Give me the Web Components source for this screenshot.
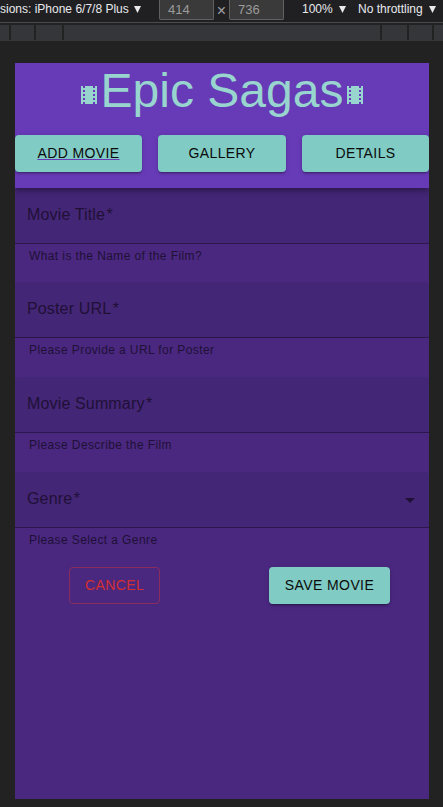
<!DOCTYPE html>
<html lang="en"><head><meta charset="utf-8"><title>Epic Sagas</title>
<style>html,body{margin:0;height:100%;overflow:hidden;background:#222223;font-family:"Liberation Sans",Arial,sans-serif}</style>
</head><body><saga-app></saga-app>
<script>
const define = (name, html, setup) => customElements.define(name, class extends HTMLElement {
  connectedCallback() {
    if (this.shadowRoot) return;
    const t = document.createElement('template');
    t.innerHTML = html;
    this.attachShadow({mode: 'open'}).append(t.content.cloneNode(true));
    if (setup) setup(this, this.shadowRoot);
  }
});

define('film-icon', `<style>:host{display:block;width:24px;height:24px;flex:none}svg{display:block}</style>
<svg width="24" height="24" viewBox="0 0 24 24" fill="currentColor"><path d="M18 3v2h-2V3H8v2H6V3H4v18h2v-2h2v2h8v-2h2v2h2V3h-2zM8 17H6v-2h2v2zm0-4H6v-2h2v2zm0-4H6V7h2v2zm10 8h-2v-2h2v2zm0-4h-2v-2h2v2zm0-4h-2V7h2v2z"/></svg>`);

define('device-toolbar', `<style>
:host{display:flex;box-sizing:border-box;height:23px;background:#202023;border-bottom:1px solid #4b4b4e;color:#e9eaed;font-size:12px;line-height:14px;white-space:nowrap;overflow:hidden;padding-top:2px}
span,i{flex:none;display:block}i{width:7px;height:7px;margin-top:4px;background:currentColor;clip-path:polygon(0 0,100% 0,50% 100%)}
.device{width:134px}.dim{box-sizing:border-box;width:55px;height:20px;margin-top:-2px;border:1px solid #606060;border-top:0;border-radius:0 0 2px 2px;background:#3a3a3b;color:#9b9b9b;font-size:13px;padding:3px 0 0 8px;line-height:14px}
.first{margin-left:18px}.x{width:15px;text-align:center;color:#a0a0a3;font-size:16px;line-height:17px}.zoom{width:37px;margin-left:18px}.throttle{width:82px;margin-left:12px}
</style><span class="device">sions: iPhone 6/7/8 Plus</span><i></i><span class="dim first">414</span><span class="x">×</span><span class="dim">736</span><span class="zoom">100%</span><i></i><span class="throttle">No throttling</span><i style="margin-left:-11px"></i>`);

define('media-ruler', `<style>:host{display:grid;grid-template-columns:9px 23px 26px 316px 25px 23px 9px;column-gap:2px;height:15px;margin-top:2px;border-bottom:1px solid #35363a}i{background:#35363a}</style><i></i><i></i><i></i><i></i><i></i><i></i><i></i>`);

define('saga-button', `<style>
:host{display:block;height:37px}
button{all:unset;box-sizing:border-box;display:block;width:100%;height:100%;border-radius:4px;background:#80cbc4;color:#0b0b0b;font-size:14px;line-height:37px;letter-spacing:.4px;text-align:center;white-space:nowrap;box-shadow:0 3px 1px -2px #0003,0 2px 2px #00000024,0 1px 5px #0000001f}
:host([active]) button{text-decoration:underline;text-decoration-color:#673ab7;text-decoration-skip-ink:none;text-underline-offset:1px}
:host([outlined]) button{background:none;box-shadow:none;border:1px solid #8b2c5e;color:#d32f2f;line-height:35px}
</style><button><slot></slot></button>`);

define('saga-header', `<style>
:host{display:flex;flex-direction:column;box-sizing:border-box;height:125px;background:#673ab7;position:relative;box-shadow:0 2px 4px -1px #0003,0 4px 5px #00000024,0 1px 10px #0000001f}
.title{display:flex;justify-content:center;align-items:center;height:56px;color:#99d5cf;margin-bottom:16px}
h1{margin:0;font-size:48px;font-weight:400;line-height:56px;white-space:nowrap}film-icon{margin-top:8px}
nav{display:grid;grid-template-columns:127px 128px 127px;column-gap:16px}
</style><div class="title"><film-icon></film-icon><h1>Epic Sagas</h1><film-icon></film-icon></div>
<nav><saga-button active>ADD MOVIE</saga-button><saga-button>GALLERY</saga-button><saga-button>DETAILS</saga-button></nav>`);

define('saga-field', `<style>
:host{display:block;color:#201036}
.box{display:flex;align-items:center;justify-content:space-between;box-sizing:border-box;height:56px;padding:0 12px;border-bottom:1px solid #2b174b;background:#442676;border-radius:4px 4px 0 0;font-size:16px;letter-spacing:.15px;line-height:24px}
.label{padding-bottom:1px}
svg{display:none}:host([select]) svg{display:block;margin-right:-5px}
p{margin:2px 14px 0;font-size:12px;line-height:20px;letter-spacing:.4px}
</style><div class="box"><span class="label"></span><svg width="24" height="24" viewBox="0 0 24 24" fill="currentColor"><path d="M7 10l5 5 5-5z"/></svg></div><p><slot></slot></p>`,
(host, root) => root.querySelector('.label').textContent = host.getAttribute('label') + '\u200a*');

define('saga-form', `<style>
:host{display:block}
.fields{display:grid;grid-template-rows:94px 95px 95px 95px}
.actions{display:grid;grid-template-columns:91px 121px;column-gap:109px;padding-left:54px}
</style><div class="fields"><saga-field label="Movie Title">What is the Name of the Film?</saga-field><saga-field label="Poster URL">Please Provide a URL for Poster</saga-field><saga-field label="Movie Summary">Please Describe the Film</saga-field><saga-field label="Genre" select>Please Select a Genre</saga-field></div>
<div class="actions"><saga-button outlined>CANCEL</saga-button><saga-button>SAVE MOVIE</saga-button></div>`);

define('saga-app', `<style>:host{display:block;height:807px}main{margin:22px 14px 0 15px;height:736px;background:#4a2880;overflow:hidden}</style>
<device-toolbar></device-toolbar><media-ruler></media-ruler><main><saga-header></saga-header><saga-form></saga-form></main>`);
</script></body></html>
